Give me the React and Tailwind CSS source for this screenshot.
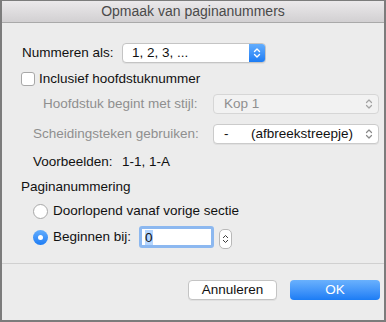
import React from 'react';

function Chevrons({ color = '#fff', w = 8, h = 12, sw = 1.4 }) {
  return (
    <svg width={w} height={h} viewBox="0 0 8 12" fill="none">
      <path d="M1.5 4.5 L4 2 L6.5 4.5" stroke={color} strokeWidth={sw} strokeLinecap="round" strokeLinejoin="round" />
      <path d="M1.5 7.5 L4 10 L6.5 7.5" stroke={color} strokeWidth={sw} strokeLinecap="round" strokeLinejoin="round" />
    </svg>
  );
}

export default function App() {
  return (
    <div className="w-[386px] h-[322px] bg-[#ececec] border-2 border-t border-[#7c7c7c] flex flex-col text-[13.5px] text-[#111] font-['Liberation_Sans',Arial,sans-serif]">
      {/* Title bar */}
      <div className="h-[22px] shrink-0 flex items-center justify-center border-b border-[#a9a9a9] bg-gradient-to-b from-[#ebe9eb] to-[#d2d0d2] text-[#4a4a4a] text-[14px]">
        Opmaak van paginanummers
      </div>

      {/* Nummeren als */}
      <div className="mt-[20px] h-[20px] flex items-center pl-[20px]">
        <span className="w-[100px]">Nummeren als:</span>
        <div className="w-[144px] h-[20px] flex rounded-[4px] border border-[#c4c4c4] bg-white shadow-[0_1px_0_rgba(0,0,0,0.05)] overflow-hidden">
          <span className="flex-1 flex items-center pl-[9px]">1, 2, 3, ...</span>
          <div className="w-[16px] flex items-center justify-center bg-gradient-to-b from-[#62adfd] to-[#1b7cf4]">
            <Chevrons />
          </div>
        </div>
      </div>

      {/* Checkbox */}
      <div className="mt-[9px] h-[14px] flex items-center pl-[19px]">
        <div className="w-[14px] h-[14px] rounded-[3px] border border-[#a8a8a8] bg-white" />
        <span className="ml-[4px]">Inclusief hoofdstuknummer</span>
      </div>

      {/* Hoofdstuk begint met stijl */}
      <div className="mt-[8px] h-[20px] flex items-center pl-[41px] text-[#8f8f8f]">
        <span className="w-[170px]">Hoofdstuk begint met stijl:</span>
        <div className="w-[166px] h-[20px] flex items-center rounded-[4px] border border-[#d6d6d6] bg-[#f2f2f2] pl-[10px] pr-[5px]">
          <span className="flex-1">Kop 1</span>
          <Chevrons color="#a3a3a3" sw={1.2} />
        </div>
      </div>

      {/* Scheidingsteken */}
      <div className="mt-[10px] h-[20px] flex items-center pl-[31px]">
        <span className="w-[180px] text-[#8f8f8f]">Scheidingsteken gebruiken:</span>
        <div className="w-[166px] h-[20px] flex items-center rounded-[4px] border border-[#cbcbcb] bg-white pl-[10px] pr-[5px] shadow-[0_1px_0_rgba(0,0,0,0.05)]">
          <span className="w-[27px]">-</span>
          <span className="flex-1">(afbreekstreepje)</span>
          <Chevrons color="#8a8a8a" sw={1.2} />
        </div>
      </div>

      {/* Voorbeelden */}
      <div className="mt-[10px] h-[16px] flex items-center pl-[31px]">
        <span className="w-[89px]">Voorbeelden:</span>
        <span>1-1, 1-A</span>
      </div>

      {/* Paginanummering */}
      <div className="mt-[9px] h-[16px] flex items-center pl-[19px]">Paginanummering</div>

      {/* Radio 1 */}
      <div className="mt-[8px] h-[16px] flex items-center pl-[31px]">
        <div className="w-[15px] h-[15px] rounded-full border border-[#a8a8a8] bg-white" />
        <span className="ml-[5px]">Doorlopend vanaf vorige sectie</span>
      </div>

      {/* Radio 2 */}
      <div className="mt-[7px] h-[22px] flex items-center pl-[31px]">
        <div className="w-[15px] h-[15px] rounded-full bg-gradient-to-b from-[#62adfd] to-[#1b7cf4] flex items-center justify-center">
          <div className="w-[5px] h-[5px] rounded-full bg-white" />
        </div>
        <span className="ml-[5px] w-[86px]">Beginnen bij:</span>
        <div className="w-[75px] h-[22px] rounded-[3px] border-[3px] border-[#8cb8f0] bg-white flex items-center pl-[3px]">
          <span className="bg-[#b4d5fe] leading-[15px]">0</span>
        </div>
        <div className="ml-[5px] w-[13px] h-[20px] mt-[3px] rounded-[5px] border border-[#b8b8b8] bg-white flex items-center justify-center">
          <Chevrons color="#333" w={7} h={12} sw={1.1} />
        </div>
      </div>

      {/* Separator */}
      <div className="mt-[15px] h-px bg-[#d0d0d0] shrink-0" />

      {/* Buttons */}
      <div className="mt-[16px] h-[20px] flex items-center justify-end pr-[4px] gap-[13px]">
        <div className="w-[89px] h-[20px] rounded-[4px] border border-[#c4c4c4] bg-white flex items-center justify-center shadow-[0_1px_0_rgba(0,0,0,0.05)]">
          Annuleren
        </div>
        <div className="w-[90px] h-[20px] rounded-[4px] bg-gradient-to-b from-[#69b1fd] to-[#1a7cf5] text-white flex items-center justify-center">
          OK
        </div>
      </div>
    </div>
  );
}
